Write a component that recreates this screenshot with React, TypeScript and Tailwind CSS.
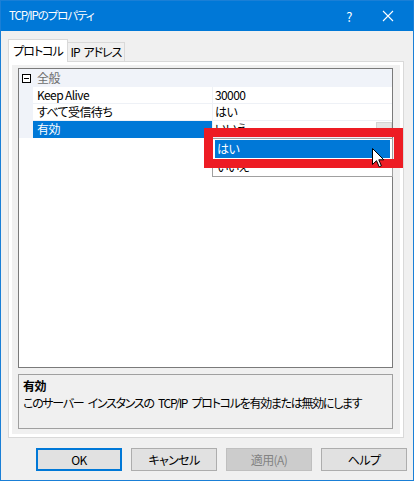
import React from "react";

const font = "font-['Noto_Sans_CJK_JP',sans-serif] [font-feature-settings:'palt']";

function Cursor() {
  return (
    <svg width="13" height="20" viewBox="0 0 13 20" className="block">
      <path
        d="M0.5 0.5 L0.5 16.5 L4.5 12.7 L7.2 18.8 L9.4 17.8 L6.8 11.8 L11.8 11.8 Z"
        fill="#ffffff"
        stroke="#000000"
        strokeWidth="1"
        strokeLinejoin="miter"
      />
    </svg>
  );
}

function Row({
  label,
  value,
  selected,
  children,
}: {
  label: string;
  value: string;
  selected?: boolean;
  children?: React.ReactNode;
}) {
  return (
    <div className="flex h-[17px]">
      <div className="w-[14px] bg-[#f0f3f9]" />
      <div
        className={
          selected
            ? "w-[179px] pl-[4px] bg-[#0078d7] text-white leading-[16px]"
            : "w-[179px] pl-[4px] border-b border-[#eef1f6] leading-[16px]"
        }
      >
        {label}
      </div>
      <div className="w-px bg-[#eef1f6]" />
      <div className="relative flex-1 pl-[2px] border-b border-[#eef1f6] leading-[16px]">
        {value}
        {children}
      </div>
    </div>
  );
}

function Btn({
  label,
  primary,
  disabled,
}: {
  label: string;
  primary?: boolean;
  disabled?: boolean;
}) {
  let cls = "w-[86px] h-[23px] flex items-center justify-center text-[12px] ";
  if (primary) cls += "border-2 border-[#0078d7] bg-[#e1e1e1] text-black";
  else if (disabled) cls += "border border-[#bfbfbf] bg-[#cccccc] text-[#838383]";
  else cls += "border border-[#adadad] bg-[#e1e1e1] text-black";
  return <div className={cls}>{label}</div>;
}

export default function App() {
  return (
    <div
      className={`relative w-[414px] h-[481px] overflow-hidden bg-[#f0f0f0] border border-[#1a7fd6] flex flex-col text-[12px] tracking-[-0.6px] text-black ${font}`}
    >
      {/* Title bar */}
      <div className="h-[30px] bg-[#0078d7] text-white flex items-center pl-[8px] shrink-0">
        <span className="flex-1 leading-none text-[11.5px] tracking-[-1.1px]">TCP/IPのプロパティ</span>
        <span className="w-[20px] text-center text-[13px] leading-none mr-[23px]">?</span>
        <svg width="12" height="12" viewBox="0 0 12 12" className="mr-[19px]">
          <path d="M1 1 L11 11 M11 1 L1 11" stroke="#ffffff" strokeWidth="1.1" />
        </svg>
      </div>

      {/* Tabs */}
      <div className="mt-[8px] pl-[7px] h-[23px] flex items-end shrink-0">
        <div className="relative z-10 w-[60px] h-[23px] border border-b-0 border-[#d9d9d9] bg-white flex items-start justify-center pt-[3px] leading-[16px] tracking-[-1px]">
          プロトコル
        </div>
        <div className="w-[57px] h-[20px] border border-l-0 border-[#d9d9d9] bg-[#f0f0f0] flex items-start justify-center pt-[1px] leading-[16px] tracking-[-1px] [word-spacing:2px]">
          IP アドレス
        </div>
      </div>

      {/* Panel */}
      <div className="-mt-px ml-[7px] w-[396px] h-[377px] border border-[#d9d9d9] bg-white p-[3px] shrink-0">
        <div className="h-full bg-[#f0f0f0] pt-[3px] pl-[6px] pr-[7px] pb-[5px] flex flex-col gap-[6px]">
          {/* Property grid */}
          <div className="h-[300px] border border-[#7a7a7a] bg-white flex flex-col">
            <div className="flex h-[18px] bg-[#f0f3f9] items-center">
              <div className="w-[14px] flex items-center justify-center pl-[1px]">
                <div className="w-[9px] h-[9px] border border-black flex items-center justify-center bg-white">
                  <div className="w-[5px] h-px bg-black" />
                </div>
              </div>
              <div className="pl-[4px] text-[#6d6d6d] leading-[16px]">全般</div>
            </div>
            <Row label="Keep Alive" value="30000" />
            <Row label="すべて受信待ち" value="はい" />
            <Row label="有効" value="いいえ" selected>
              <div className="absolute right-0 top-[1px] w-[16px] h-[15px] bg-[#e5e5e5] border border-[#d4d4d4]" />
            </Row>
          </div>

          {/* Description */}
          <div className="flex-1 border border-[#a0a0a0] bg-[#f0f0f0] px-[4px] pt-[2px]">
            <div className="font-bold leading-[17px]">有効</div>
            <div className="leading-[17px] whitespace-nowrap tracking-[-1.3px] [word-spacing:3px]">
              このサーバー インスタンスの TCP/IP プロトコルを有効または無効にします
            </div>
          </div>
        </div>
      </div>

      {/* Buttons */}
      <div className="mt-[10px] pr-[6px] flex justify-end gap-[9px] shrink-0">
        <Btn label="OK" primary />
        <Btn label="キャンセル" />
        <Btn label="適用(A)" disabled />
        <Btn label="ヘルプ" />
      </div>

      {/* Dropdown list */}
      <div className="absolute left-[211px] top-[137px] w-[181px] h-[39px] border border-[#a0a0a0] bg-white pt-px px-[2px]">
        <div className="h-[18px] bg-[#0078d7] text-white pl-[2px] leading-[18px]">はい</div>
        <div className="h-[18px] pl-[2px] leading-[18px]">いいえ</div>
      </div>

      {/* Red highlight */}
      <div className="absolute left-[203px] top-[127px] w-[199px] h-[40px] border-[9px] border-[#ed1c24]" />

      {/* Cursor */}
      <div className="absolute left-[371px] top-[147px]">
        <Cursor />
      </div>
    </div>
  );
}
